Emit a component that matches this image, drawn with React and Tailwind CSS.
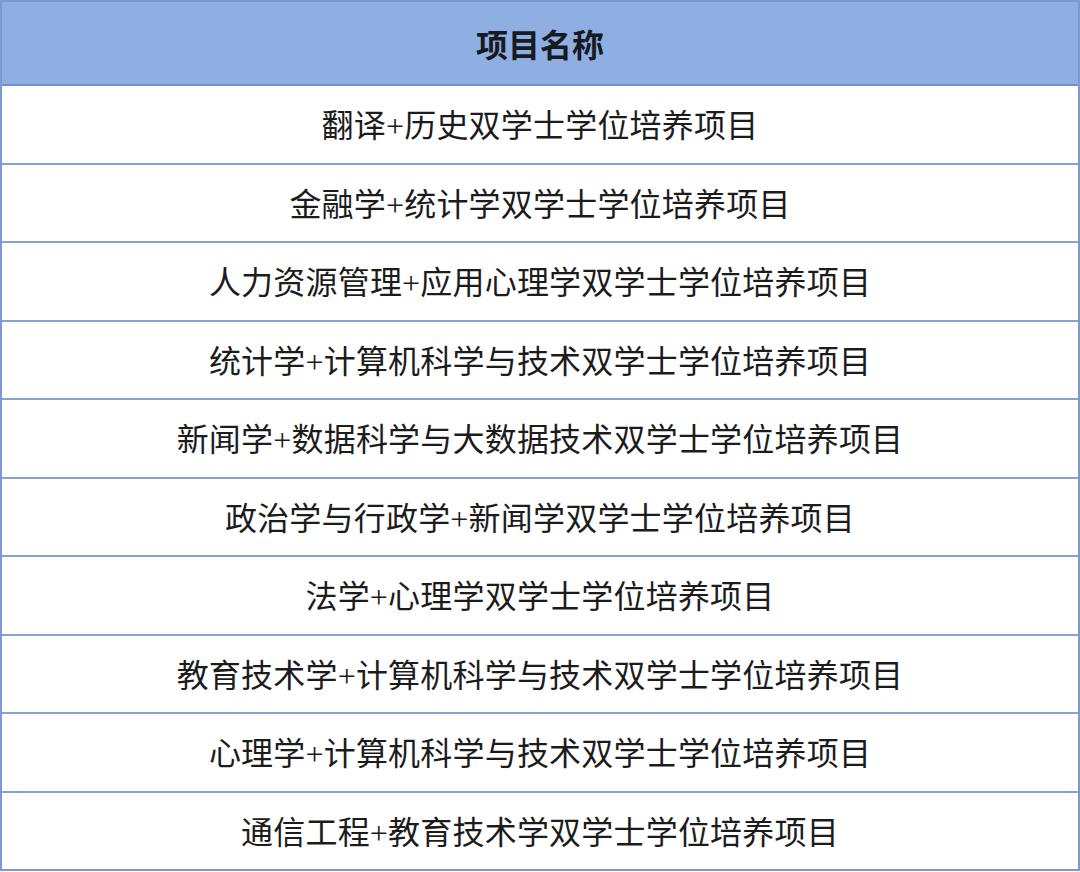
import React from "react";

const items = [
  "翻译+历史双学士学位培养项目",
  "金融学+统计学双学士学位培养项目",
  "人力资源管理+应用心理学双学士学位培养项目",
  "统计学+计算机科学与技术双学士学位培养项目",
  "新闻学+数据科学与大数据技术双学士学位培养项目",
  "政治学与行政学+新闻学双学士学位培养项目",
  "法学+心理学双学士学位培养项目",
  "教育技术学+计算机科学与技术双学士学位培养项目",
  "心理学+计算机科学与技术双学士学位培养项目",
  "通信工程+教育技术学双学士学位培养项目",
];

export default function App() {
  return (
    <div className="w-[1080px] h-[872px] bg-white pb-[1px]">
      <div className="h-full flex flex-col border-x-2 border-y-2 border-[#7d98d2] font-['Liberation_Serif','Noto_Sans_CJK_SC',serif]">
        {/* Header */}
        <div className="h-[84px] shrink-0 flex items-center justify-center bg-[#8faee2] border-b-2 border-[#7590c4]">
          <span className="text-[32px] font-bold text-[#161a22] font-['Noto_Sans_CJK_SC',sans-serif]">
            项目名称
          </span>
        </div>

        {/* Rows */}
        {items.map((name, i) => (
          <div
            key={i}
            className={
              i === 0
                ? "flex-1 flex items-center justify-center pt-1"
                : "flex-1 flex items-center justify-center pt-1 border-t-2 border-[#8aa2cf]"
            }
          >
            <span className="text-[32px] tracking-[0.2px] text-[#1c1c1c] leading-none">{name}</span>
          </div>
        ))}
      </div>
    </div>
  );
}
